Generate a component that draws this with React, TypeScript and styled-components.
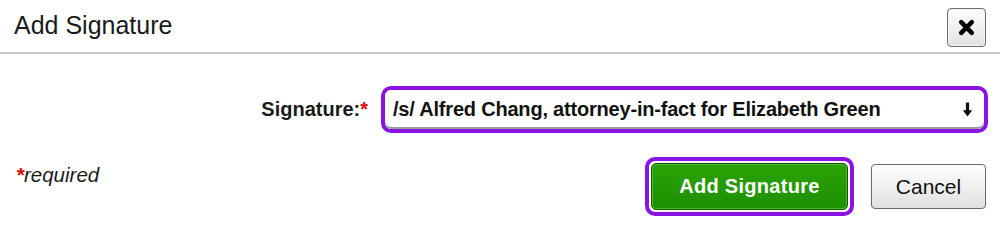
import { createGlobalStyle, styled } from "styled-components";

const GlobalStyle = createGlobalStyle`
  html, body {
    margin: 0;
    padding: 0;
    background: #ffffff;
    font-family: "Liberation Sans", Arial, sans-serif;
    color: #111111;
  }
`;

export default function App() {
  return (
    <>
      <GlobalStyle />
      <Dialog>
        <Header>
          <Title>Add Signature</Title>
          <CloseButton aria-label="close">
            <svg width="17" height="17" viewBox="0 0 16 16">
              <path
                d="M3 3 L13 13 M13 3 L3 13"
                stroke="#000"
                strokeWidth="4.2"
                strokeLinecap="round"
              />
            </svg>
          </CloseButton>
        </Header>

        <FormRow>
          <Label>
            Signature:<Star>*</Star>
          </Label>
          <FocusRing>
            <SelectBox>
              <SelectText>/s/ Alfred Chang, attorney-in-fact for Elizabeth Green</SelectText>
              <svg width="11" height="15" viewBox="0 0 10 14">
                <path d="M3.5 0.5 H6.5 V7.8 H9.4 L5 13.5 L0.6 7.8 H3.5 Z" fill="#111" />
              </svg>
            </SelectBox>
          </FocusRing>
        </FormRow>

        <Footer>
          <Required>
            <Star>*</Star>required
          </Required>
          <Actions>
            <ButtonRing>
              <PrimaryButton>Add Signature</PrimaryButton>
            </ButtonRing>
            <SecondaryButton>Cancel</SecondaryButton>
          </Actions>
        </Footer>
      </Dialog>
    </>
  );
}

const Dialog = styled.div`
  width: 1000px;
  height: 224px;
  display: flex;
  flex-direction: column;
  background: #ffffff;
`;

const Header = styled.div`
  height: 52px;
  display: flex;
  align-items: center;
  justify-content: space-between;
  padding: 0 14px 0 14px;
  border-bottom: 2px solid #c9c9c9;
`;

const Title = styled.h1`
  margin: 0;
  font-size: 25px;
  font-weight: normal;
  color: #1a1a1a;
  line-height: 1;
  margin-top: -2px;
`;

const CloseButton = styled.button`
  width: 39px;
  height: 39px;
  margin-top: 3px;
  display: flex;
  align-items: center;
  justify-content: center;
  padding: 0;
  border: 1px solid #6e6e6e;
  border-radius: 4px;
  background: linear-gradient(#ffffff, #e2e2e2);
  box-shadow: inset 0 0 0 1px #f4f4f4;
`;

const FormRow = styled.div`
  display: flex;
  align-items: center;
  justify-content: flex-end;
  gap: 13px;
  margin-top: 32px;
  padding-right: 12px;
`;

const Label = styled.span`
  font-size: 20px;
  font-weight: bold;
  color: #1a1a1a;
`;

const Star = styled.span`
  color: #e00000;
  font-weight: bold;
`;

const FocusRing = styled.div`
  border: 4px solid #8a12e2;
  border-radius: 10px;
`;

const SelectBox = styled.div`
  width: 599px;
  height: 39px;
  box-sizing: border-box;
  display: flex;
  align-items: center;
  justify-content: space-between;
  padding: 0 11px 0 8px;
  border-radius: 6px;
  background: #ffffff;
  box-shadow: inset 0 -2px 0 #9a9a9a;
`;

const SelectText = styled.span`
  font-size: 20px;
  font-weight: bold;
  color: #111111;
  letter-spacing: -0.2px;
`;

const Footer = styled.div`
  display: flex;
  justify-content: space-between;
  align-items: flex-start;
  margin-top: 24px;
  padding: 0 14px 0 16px;
`;

const Required = styled.span`
  font-size: 20.5px;
  font-style: italic;
  color: #1a1a1a;
  margin-top: 6px;
`;

const Actions = styled.div`
  display: flex;
  align-items: center;
  gap: 17px;
`;

const ButtonRing = styled.div`
  border: 4px solid #8a12e2;
  border-radius: 10px;
  padding: 2px;
  background: #ffffff;
`;

const PrimaryButton = styled.button`
  width: 197px;
  height: 47px;
  border: 1px solid #175200;
  border-radius: 5px;
  background: linear-gradient(#2aa406, #1d8f00);
  box-shadow: inset 0 0 0 1px #4cbc2a;
  color: #ffffff;
  font-family: "Liberation Sans", Arial, sans-serif;
  font-size: 20px;
  font-weight: bold;
  letter-spacing: 0.3px;
`;

const SecondaryButton = styled.button`
  width: 115px;
  height: 45px;
  border: 1px solid #6a6a6a;
  border-radius: 4px;
  background: linear-gradient(#ffffff, #e0e0e0);
  color: #111111;
  font-family: "Liberation Sans", Arial, sans-serif;
  font-size: 21px;
`;
